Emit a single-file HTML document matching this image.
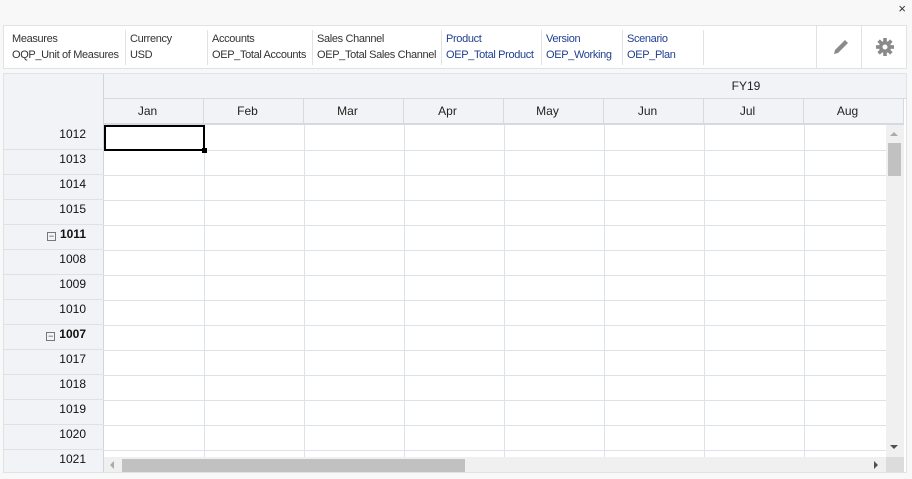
<!DOCTYPE html>
<html><head><style>
*{box-sizing:border-box;margin:0;padding:0}
body{width:912px;height:479px;background:#f8f8f8;font-family:"Liberation Sans",sans-serif;position:relative;overflow:hidden}
.x{position:absolute;right:6px;top:1px;font-size:13px;color:#333}
.pov{position:absolute;left:3px;top:25px;width:904px;height:44px;background:#fff;border:1px solid #dfe3e8}
.sec{position:absolute;top:4px;height:35px;border-right:1px solid #dfe3e8;padding-left:4px;padding-top:1px;font-size:11px;line-height:16px;white-space:nowrap;color:#333;letter-spacing:-0.35px;overflow:hidden}
.b{color:#1f3f8f}
.btn{position:absolute;top:0;height:42px;width:45px;border-left:1px solid #dfe3e8}
.grid{position:absolute;left:3px;top:73px;width:904px;height:400px;background:#fff;border:1px solid #dfe3e8;overflow:hidden}
.rh{position:absolute;left:0;top:0;width:100px;height:400px;background:#f1f3f7;border-right:1px solid #cfd5dd}
.fy{position:absolute;left:100px;top:0;width:804px;height:25px;background:#f1f3f7;border-bottom:1px solid #d5dae0;font-size:12px;text-align:center;line-height:24px;padding-left:480px;color:#222}
.m{position:absolute;top:25px;height:26px;width:100px;background:#f1f3f7;border-right:1px solid #d5dae0;border-bottom:2px solid #d5dae0;font-size:12px;text-align:center;line-height:24px;color:#222;padding-right:12px}
.r{position:absolute;left:0;width:100px;height:25px;border-bottom:1px solid #dde2e8;text-align:right;padding-right:18px;font-size:12px;line-height:19px;color:#111}
.hl{position:absolute;left:100px;width:782px;height:1px;background:#dde2e8}
.vl{position:absolute;top:51px;width:1px;height:332px;background:#dde2e8}
.bold{font-weight:bold}
.box{display:inline-block;width:9px;height:9px;border:1px solid #777;font-size:9px;line-height:6px;text-align:center;vertical-align:-1px;margin-right:4px;color:#444;font-weight:normal}
</style></head><body>
<div class="x">×</div>
<div class="pov">
<div class="sec" style="left:4px;width:118px">Measures<br>OQP_Unit of Measures</div>
<div class="sec" style="left:122px;width:82px">Currency<br>USD</div>
<div class="sec" style="left:204px;width:105px">Accounts<br>OEP_Total Accounts</div>
<div class="sec" style="left:309px;width:129px">Sales Channel<br>OEP_Total Sales Channel</div>
<div class="sec b" style="left:438px;width:100px">Product<br>OEP_Total Product</div>
<div class="sec b" style="left:538px;width:81px">Version<br>OEP_Working</div>
<div class="sec b" style="left:619px;width:81px">Scenario<br>OEP_Plan</div>
<div class="btn" style="left:812px"><svg width="45" height="42"><path d="M17 28 L18 24 L28 14 L31 17 L21 27 Z" fill="#8a8a8a"/></svg></div>
<div class="btn" style="left:857px"><svg width="45" height="42"><g transform="translate(23,21)" fill="#8a8a8a"><circle r="6"/><rect x="-1.8" y="-9" width="3.6" height="18"/><rect x="-1.8" y="-9" width="3.6" height="18" transform="rotate(45)"/><rect x="-1.8" y="-9" width="3.6" height="18" transform="rotate(90)"/><rect x="-1.8" y="-9" width="3.6" height="18" transform="rotate(135)"/><circle r="2.5" fill="#fff"/></g></svg></div>
</div>
<div class="grid">
<div class="rh"></div>
<div class="fy">FY19</div>
<div class="m" style="left:100px">Jan</div><div class="m" style="left:200px">Feb</div><div class="m" style="left:300px">Mar</div><div class="m" style="left:400px">Apr</div><div class="m" style="left:500px">May</div><div class="m" style="left:600px">Jun</div><div class="m" style="left:700px">Jul</div><div class="m" style="left:800px">Aug</div>
<div class="r" style="top:51px">1012</div>
<div class="r" style="top:76px">1013</div>
<div class="r" style="top:101px">1014</div>
<div class="r" style="top:126px">1015</div>
<div class="r bold" style="top:151px"><span class="box">−</span>1011</div>
<div class="r" style="top:176px">1008</div>
<div class="r" style="top:201px">1009</div>
<div class="r" style="top:226px">1010</div>
<div class="r bold" style="top:251px"><span class="box">−</span>1007</div>
<div class="r" style="top:276px">1017</div>
<div class="r" style="top:301px">1018</div>
<div class="r" style="top:326px">1019</div>
<div class="r" style="top:351px">1020</div>
<div class="r" style="top:376px">1021</div>
<div class="hl" style="top:76px"></div><div class="hl" style="top:101px"></div><div class="hl" style="top:126px"></div><div class="hl" style="top:151px"></div><div class="hl" style="top:176px"></div><div class="hl" style="top:201px"></div><div class="hl" style="top:226px"></div><div class="hl" style="top:251px"></div><div class="hl" style="top:276px"></div><div class="hl" style="top:301px"></div><div class="hl" style="top:326px"></div><div class="hl" style="top:351px"></div><div class="hl" style="top:376px"></div>
<div class="vl" style="left:200px"></div><div class="vl" style="left:300px"></div><div class="vl" style="left:400px"></div><div class="vl" style="left:500px"></div><div class="vl" style="left:600px"></div><div class="vl" style="left:700px"></div><div class="vl" style="left:800px"></div>
<div style="position:absolute;left:100px;top:51px;width:101px;height:26px;border:2px solid #000"></div>
<div style="position:absolute;left:198px;top:74px;width:5px;height:5px;background:#000"></div>
<div style="position:absolute;left:882px;top:51px;width:18px;height:332px;background:#f0f0f0"></div>
<div style="position:absolute;left:886px;top:58px;border:4px solid transparent;border-bottom:4px solid #aaa;border-top:0"></div>
<div style="position:absolute;left:884px;top:69px;width:13px;height:33px;background:#c1c1c1"></div>
<div style="position:absolute;left:886px;top:371px;border:4px solid transparent;border-top:4px solid #505050;border-bottom:0"></div>
<div style="position:absolute;left:100px;top:383px;width:782px;height:16px;background:#f0f0f0"></div>
<div style="position:absolute;left:106px;top:387px;border:4px solid transparent;border-right:4px solid #aaa;border-left:0"></div>
<div style="position:absolute;left:118px;top:385px;width:343px;height:13px;background:#c1c1c1"></div>
<div style="position:absolute;left:870px;top:387px;border:4px solid transparent;border-left:4px solid #505050;border-right:0"></div>
<div style="position:absolute;left:882px;top:383px;width:18px;height:16px;background:#dcdcdc"></div>
</div>
</body></html>
